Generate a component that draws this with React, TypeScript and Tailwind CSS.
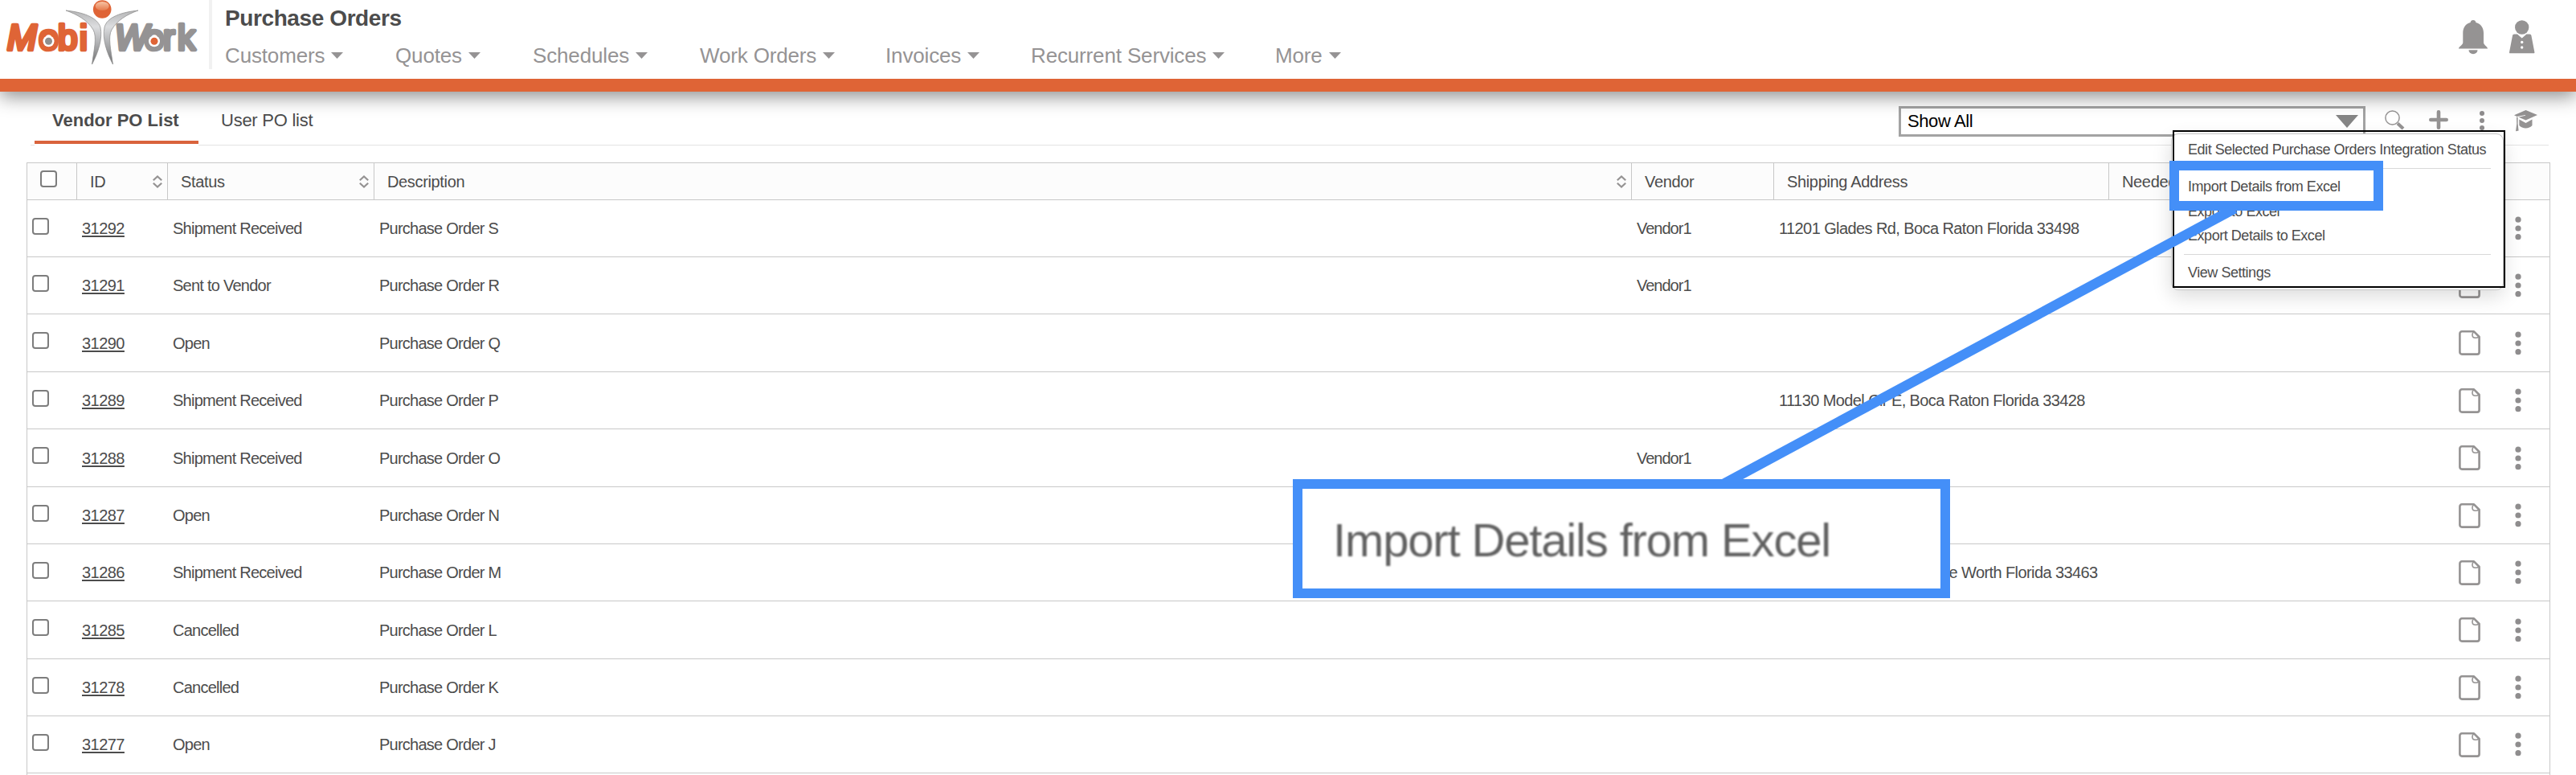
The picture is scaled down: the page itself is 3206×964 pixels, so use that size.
import { clsx } from "clsx";

interface NavItem {
  label: string;
  width: string;
}

interface Order {
  id: string;
  status: string;
  description: string;
  vendor?: string;
  address?: string;
  addressClass?: string;
  height: string;
}

const navItems: NavItem[] = [
  { label: "Customers", width: "w-[212px]" },
  { label: "Quotes", width: "w-[171px]" },
  { label: "Schedules", width: "w-[208px]" },
  { label: "Work Orders", width: "w-[231px]" },
  { label: "Invoices", width: "w-[181px]" },
  { label: "Recurrent Services", width: "w-[304px]" },
  { label: "More", width: "w-[120px]" },
];

const orders: Order[] = [
  { id: "31292", status: "Shipment Received", description: "Purchase Order S", vendor: "Vendor1", address: "11201 Glades Rd, Boca Raton Florida 33498", height: "h-[71px]" },
  { id: "31291", status: "Sent to Vendor", description: "Purchase Order R", vendor: "Vendor1", height: "h-[71px]" },
  { id: "31290", status: "Open", description: "Purchase Order Q", height: "h-[72px]" },
  { id: "31289", status: "Shipment Received", description: "Purchase Order P", address: "11130 Model Cir E, Boca Raton Florida 33428", height: "h-[71px]" },
  { id: "31288", status: "Shipment Received", description: "Purchase Order O", vendor: "Vendor1", height: "h-[72px]" },
  { id: "31287", status: "Open", description: "Purchase Order N", height: "h-[71px]" },
  { id: "31286", status: "Shipment Received", description: "Purchase Order M", address: "Lake Worth Florida 33463", addressClass: "pl-[181px]", height: "h-[71px]" },
  { id: "31285", status: "Cancelled", description: "Purchase Order L", height: "h-[72px]" },
  { id: "31278", status: "Cancelled", description: "Purchase Order K", height: "h-[71px]" },
  { id: "31277", status: "Open", description: "Purchase Order J", height: "h-[71px]" },
];

function Logo() {
  return (
    <svg width="260" height="86" viewBox="0 0 260 86" className="shrink-0">
      <defs>
        <linearGradient id="wing" x1="0" y1="0" x2="0" y2="1">
          <stop offset="0" stopColor="#b5b5b6" />
          <stop offset="0.3" stopColor="#dcdddf" />
          <stop offset="0.65" stopColor="#a9aaac" />
          <stop offset="1" stopColor="#6f6f70" />
        </linearGradient>
        <linearGradient id="head" x1="0" y1="0" x2="0" y2="1">
          <stop offset="0" stopColor="#f7c3a4" />
          <stop offset="1" stopColor="#e57a4c" />
        </linearGradient>
      </defs>
      <g fontFamily="'Liberation Sans', Arial, sans-serif" fontSize="44" strokeLinejoin="round" strokeWidth="4.600">
        <text y="62" fill="#df6436" stroke="#df6436">
          <tspan x="9" fontStyle="italic">M</tspan>
          <tspan x="48.300 72 99">obi</tspan>
        </text>
        <text y="62" fill="#959394" stroke="#959394">
          <tspan x="143" fontStyle="italic">W</tspan>
          <tspan x="179.800 203 221">ork</tspan>
        </text>
      </g>
      {/* keeps the dot of the i apart from its stem */}
      <rect x="98.500" y="35.500" width="11" height="2.500" fill="#fff" />
      <circle cx="60.500" cy="51.300" r="7" fill="#fff" />
      <circle cx="60.500" cy="51.300" r="4.500" fill="#8f8f8f" />
      <circle cx="192" cy="51.300" r="7" fill="#fff" />
      <circle cx="192" cy="51.300" r="4.500" fill="#df6436" />
      <path d="M82 13 C102 15 121 21 125 34 C128 48 122 66 114.500 80 C117 62 121 46 116 37 C109 25 96 18 82 13Z" fill="url(#wing)" stroke="#8a8a8a" strokeWidth="0.700" />
      <path d="M172 13 C152 15 133 21 130 34 C127 48 133 66 140.500 80 C138 62 134 46 139 37 C146 25 158 18 172 13Z" fill="url(#wing)" stroke="#8a8a8a" strokeWidth="0.700" />
      <circle cx="127.200" cy="11.500" r="11.300" fill="#df6436" />
      <ellipse cx="127.200" cy="7.500" rx="8.500" ry="5.500" fill="url(#head)" />
    </svg>
  );
}

function Caret() {
  return (
    <svg width="15" height="8" viewBox="0 0 15 8">
      <path d="M0 0H15L7.500 8Z" fill="#959394" />
    </svg>
  );
}

function BellIcon() {
  return (
    <svg width="36" height="43" viewBox="0 0 36 43" fill="#959393">
      <path d="M18 0a3.500 3.500 0 0 1 3.400 3C27.500 4.500 31 9.500 31 16v12c0 3 5 5 5 7.500H0C0 33 5.300 31 5.300 28V16C5.300 9.500 8.500 4.500 14.600 3A3.500 3.500 0 0 1 18 0Z" />
      <path d="M12.500 37.200h11a5.500 5 0 0 1-11 0Z" />
    </svg>
  );
}

function PersonIcon() {
  return (
    <svg width="32" height="42" viewBox="0 0 32 42" fill="#959393">
      <circle cx="15.700" cy="9" r="8.700" />
      <path d="M6 17.500h4l5.700 5 5.700-5h4c1 0 1.800.8 2 1.800L31.400 40c.1.700-.3 1.300-1 1.300H1c-.7 0-1.100-.6-1-1.300l4-20.700c.2-1 1-1.800 2-1.800Z" />
      <circle cx="15.700" cy="27.500" r="1.700" fill="#fff" />
      <circle cx="15.700" cy="34" r="1.700" fill="#fff" />
    </svg>
  );
}

function SearchIcon() {
  return (
    <svg width="25" height="25" viewBox="0 0 25 25" fill="none" stroke="#959393">
      <circle cx="9.500" cy="9.500" r="8.600" strokeWidth="1.500" />
      <path d="M16 16.500l7 6.500" strokeWidth="4" />
    </svg>
  );
}

function PlusIcon() {
  return (
    <svg width="24" height="24" viewBox="0 0 24 24" stroke="#959393" strokeWidth="4.600" strokeLinecap="round">
      <path d="M12 2.300V21.700M2.300 12H21.700" />
    </svg>
  );
}

function GraduationIcon() {
  return (
    <svg width="29" height="27" viewBox="0 0 29 27" fill="#959393">
      <path d="M14.500 0 29 6 14.500 12.500 5.500 8.700 14 6.800v-.7L3.500 8 0 6.300Z" />
      <path d="M3 8.500l1.600.6V17l1 8.500-3.600.8L3.200 17Z" />
      <path d="M6.300 11.500l8.200 4.500 8-4.500v7.500c-3.500 4.500-12.500 4.500-16.200 0Z" />
    </svg>
  );
}

function Dots({ large = false }: { large?: boolean }) {
  return large ? (
    <svg width="8" height="30" viewBox="0 0 8 30" fill="#8f8d8e">
      <circle cx="4" cy="4.200" r="3.600" />
      <circle cx="4" cy="15" r="3.600" />
      <circle cx="4" cy="25.700" r="3.600" />
    </svg>
  ) : (
    <svg width="6" height="24" viewBox="0 0 6 24" fill="#8f8d8e">
      <circle cx="3" cy="3" r="3" />
      <circle cx="3" cy="12" r="3" />
      <circle cx="3" cy="21" r="3" />
    </svg>
  );
}

function PageIcon() {
  return (
    <svg width="27" height="31" viewBox="0 0 27 31" fill="none" stroke="#959393">
      <path d="M4 1.300H19L25.600 8V27a2.600 2.600 0 0 1-2.600 2.600H4A2.600 2.600 0 0 1 1.400 27V4A2.600 2.600 0 0 1 4 1.300Z" strokeWidth="2.600" strokeLinejoin="round" />
      <path d="M19 1.500C16 4 16 9.500 21 9.300c1.500 0 3-.5 4.300-1.500" strokeWidth="1.500" />
    </svg>
  );
}

function SortIcon() {
  return (
    <svg width="12" height="16" viewBox="0 0 12 16" fill="none" stroke="#959393" strokeWidth="2.200">
      <path d="M.8 6.200 6 1.500l5.200 4.700M.8 9.800 6 14.500l5.200-4.700" />
    </svg>
  );
}

function Checkbox() {
  return <span className="block size-[21px] rounded-[4px] border-2 border-[#7d7d7d] bg-white" />;
}

function HeaderCell({ label, width, sortable = false }: { label: string; width: string; sortable?: boolean }) {
  return (
    <div className={clsx("flex items-center justify-between border-l border-[#c8c8c8] pr-[6px] pl-4", width)}>
      <span>{label}</span>
      {sortable && <SortIcon />}
    </div>
  );
}

function OrderRow({ order }: { order: Order }) {
  return (
    <div className={clsx("flex items-center border-b border-[#c8c8c8] text-[20px] leading-[24px]", order.height)}>
      <div className="w-[62px] pb-[6px] pl-[6px]">
        <Checkbox />
      </div>
      <div className="w-[113px] pl-[6px] tracking-[-0.54px] underline underline-offset-2">{order.id}</div>
      <div className="w-[257px] pl-[6px] tracking-[-0.75px]">{order.status}</div>
      <div className="w-[1565px] pl-[6px] tracking-[-0.75px]">{order.description}</div>
      <div className="w-[177px] pl-[6px] tracking-[-1px]">{order.vendor}</div>
      <div className="w-[845px] pl-[6px] tracking-[-0.59px]">
        <span className={order.addressClass}>{order.address}</span>
      </div>
      <div className="flex grow items-center pl-[7px]">
        <PageIcon />
        <div className="ml-[43px]">
          <Dots large />
        </div>
      </div>
    </div>
  );
}

function ActionMenu() {
  return (
    <>
      <div className="absolute top-[166px] left-[2702px] h-[195px] w-[414px] rounded-[9px] border border-[#c6c6c6] bg-white px-[15px] text-[18px] leading-[22px] tracking-[-0.46px] whitespace-nowrap shadow-[0_8px_24px_rgba(0,0,0,0.14)]">
        <div className="border-b border-[#d8d8d8] px-[5px] pt-2 pb-3">Edit Selected Purchase Orders Integration Status</div>
        <div className="border-b border-[#d8d8d8] px-[5px] pt-[11px] pb-3">
          <div className="mb-[9px]">Import Details from Excel</div>
          <div className="mb-2">Export to Excel</div>
          <div>Export Details to Excel</div>
        </div>
        <div className="px-[5px] pt-[11px]">View Settings</div>
      </div>
      <div className="absolute top-[162px] left-[2704px] h-[196px] w-[414px] border-2 border-black" />
    </>
  );
}

function Callout() {
  return (
    <>
      <svg className="absolute top-0 left-0" width="3206" height="964" viewBox="0 0 3206 964">
        <path d="M2145 602 2781 259.500" stroke="#448ff8" strokeWidth="12.400" />
      </svg>
      <div className="absolute top-[200px] left-[2700px] h-[62px] w-[266px] border-[12px] border-[#448ff8] bg-white" />
      <div className="absolute top-[221px] left-[2723px] text-[18px] leading-[22px] tracking-[-0.46px] whitespace-nowrap">
        Import Details from Excel
      </div>
      <div className="absolute top-[596px] left-[1609px] flex h-[148px] w-[818px] items-center border-[12px] border-[#448ff8] bg-white pt-[3px] pl-[38px] text-[58px] leading-none tracking-[-1.15px] whitespace-nowrap text-[#606060]">
        <span className="blur-[1px]">Import Details from Excel</span>
      </div>
    </>
  );
}

export default function App() {
  return (
    <div className="relative h-[964px] w-[3206px] overflow-hidden bg-white font-['Liberation_Sans',Arial,sans-serif] text-[#4c4c4c]">
      <header className="relative flex h-[114px] border-b-[16px] border-[#df6436] bg-white shadow-[0_6px_22px_rgba(0,0,0,0.45)]">
        <Logo />
        <div className="h-[86px] w-[4px] bg-[#f1f1f1]" />
        <div className="grow pt-[7px] pl-[16px]">
          <h1 className="text-[28px] leading-[32px] font-bold tracking-[-0.4px]">Purchase Orders</h1>
          <nav className="mt-[14px] flex text-[26px] leading-[32px] tracking-[-0.15px] text-[#959394]">
            {navItems.map(({ label, width }) => (
              <div key={label} className={clsx("flex items-center gap-[8px] whitespace-nowrap", width)}>
                {label}
                <Caret />
              </div>
            ))}
          </nav>
        </div>
        <div className="flex gap-[27px] pt-[25px] pr-[51px]">
          <BellIcon />
          <PersonIcon />
        </div>
      </header>

      <div className="mr-[34px] ml-[38px] flex h-[67px] justify-between border-b border-[#e3e3e3]">
        <div className="flex pl-[5px] text-[22px] leading-[26px]">
          <div className="h-[67px] w-[204px] bg-white">
            <div className="h-[65px] border-b-4 border-[#d9633c] pt-[23px] pl-[22px] font-bold">Vendor PO List</div>
          </div>
          <div className="pt-[23px] pl-[28px] tracking-[-0.25px]">User PO list</div>
        </div>
        <div className="flex pt-[18px]">
          <div className="flex h-[38px] w-[581px] items-center justify-between border-[3px] border-[#a3a3a3] bg-white pr-[6px] pb-px pl-[8px] text-[22px] tracking-[-0.4px] text-black">
            Show All
            <svg width="28" height="16" viewBox="0 0 28 16">
              <path d="M0 0H28L14 16Z" fill="#858585" />
            </svg>
          </div>
          <div className="flex items-start pt-[5px] pr-[14px]">
            <div className="ml-[24px]"><SearchIcon /></div>
            <div className="ml-[30px]"><PlusIcon /></div>
            <div className="ml-[39px] pt-[1px]"><Dots /></div>
            <div className="ml-[37px]"><GraduationIcon /></div>
          </div>
        </div>
      </div>

      <main className="mt-[21px] ml-[33px] w-[3141px] border-x border-t border-[#c8c8c8]">
        <div className="flex h-[46px] border-b border-[#c8c8c8] bg-[#fcfcfc] text-[20px] tracking-[-0.35px]">
          <div className="w-[61px] pt-[9px] pl-[16px]">
            <Checkbox />
          </div>
          <HeaderCell label="ID" width="w-[113px]" sortable />
          <HeaderCell label="Status" width="w-[257px]" sortable />
          <HeaderCell label="Description" width="w-[1565px]" sortable />
          <HeaderCell label="Vendor" width="w-[177px]" />
          <HeaderCell label="Shipping Address" width="w-[417px]" />
          <HeaderCell label="Needed By" width="w-[549px]" />
        </div>
        {orders.map((order) => (
          <OrderRow key={order.id} order={order} />
        ))}
        <div className="h-8" />
      </main>

      <ActionMenu />
      <Callout />
    </div>
  );
}
